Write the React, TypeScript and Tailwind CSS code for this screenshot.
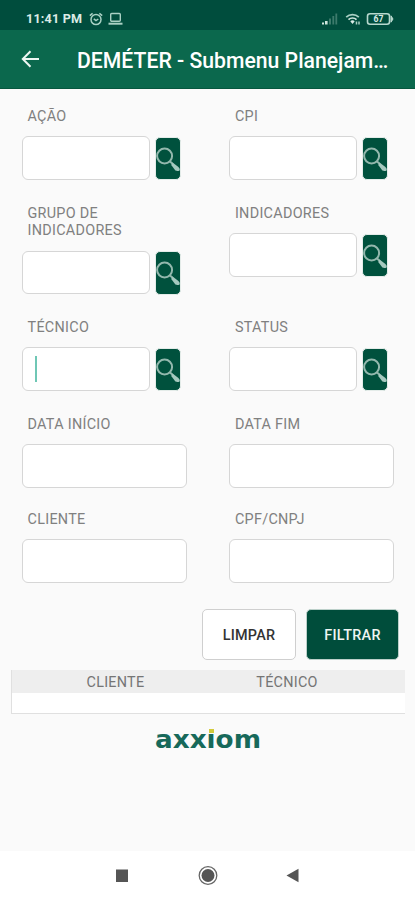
type FieldProps = {
  label: string;
  search?: boolean;
  focused?: boolean;
};

function SearchIcon() {
  return (
    <svg width="26" height="44" viewBox="0 0 26 44" className="block">
      <circle cx="9.6" cy="19" r="7.5" fill="none" stroke="#93b8ad" strokeWidth="2" />
      <path d="M14.8 24.2l3 2.8" stroke="#93b8ad" strokeWidth="2" />
      <path
        d="M17.6 25.6l5.8 4.4q1.8 1.8 1.2 3.4q-1.8 1.2-4.2 0.2l-4.2-5.6z"
        fill="#a5c9bf"
      />
    </svg>
  );
}

function Field({ label, search, focused }: FieldProps) {
  return (
    <div className="w-[165px]">
      <div className="w-[130px] pl-[5.5px] mb-[11px] text-[14.4px] leading-[17.3px] tracking-[0.29px] text-[#808080]">
        {label}
      </div>
      <div className="flex gap-[5px]">
        <div
          className={
            "flex items-center h-[43.5px] rounded-[6px] border border-[#d6d6d6] bg-white " +
            (search ? "w-[128px]" : "w-[165px]")
          }
        >
          {focused && <span className="ml-[11.5px] h-[26px] w-[2.5px] bg-[#6fc7b5]" />}
        </div>
        {search && (
          <button className="mt-[0.5px] h-[43.5px] w-[26px] shrink-0 overflow-hidden rounded-[5px] border border-[#e4ece9] bg-[#00513d]">
            <span className="-m-px block">
              <SearchIcon />
            </span>
          </button>
        )}
      </div>
    </div>
  );
}

function StatusBar() {
  return (
    <div className="flex h-[30px] items-center bg-[#004d3d] pt-[7px] pl-[26px] text-[#dcebe6]">
      <span className="w-[58px] whitespace-nowrap text-[12.6px] font-bold leading-4 tracking-[0.2px]">
        11:41 PM
      </span>
      <svg className="ml-[4px]" width="16" height="14" viewBox="0 0 16 14" fill="none" stroke="#a9d0c4" strokeWidth="1.5">
        <circle cx="8" cy="7.6" r="5" />
        <path d="M1.8 3.6L4.6 1.3M14.2 3.6L11.4 1.3M5.8 6.8L8 8.6l2.3-1.6" />
      </svg>
      <svg className="ml-[4px]" width="15" height="14" viewBox="0 0 15 14" fill="none" stroke="#a9d0c4" strokeWidth="1.4">
        <rect x="2.7" y="1.5" width="9.6" height="7.8" rx="1" />
        <path d="M0.5 11.7h14" strokeWidth="2" />
      </svg>
      <div className="ml-auto mr-[21px] flex items-center">
        <svg width="17" height="14" viewBox="0 0 17 14">
          <path d="M1 12.5v-2h2v2zM4 12.5V9h2.6v3.5z" fill="#cfe5de" />
          <path d="M8 12.5V6.5h2v6zM11.4 12.5V4h1.8v8.5zM14.4 12.5V1.5h1.8v11z" fill="#3d7b6c" />
        </svg>
        <svg className="ml-[7px]" width="17" height="14" viewBox="0 0 17 14" fill="none" strokeWidth="1.7">
          <path d="M1.2 5.1a9 9 0 0 1 12.6 0" stroke="#a9d0c4" />
          <path d="M3.5 7.6a5.8 5.8 0 0 1 8 0" stroke="#cfe5de" />
          <path d="M5.3 9.3a3.2 3.2 0 0 1 4.4 0L7.5 12z" fill="#dcebe6" />
          <path d="M11.5 9.5v3M14 9.5v3" stroke="#a9d0c4" strokeWidth="1.5" />
        </svg>
        <svg className="ml-[4px]" width="28" height="14" viewBox="0 0 28 14">
          <rect x="1.5" y="1.7" width="22" height="10.6" rx="2.5" fill="none" stroke="#b7d8ce" strokeWidth="1.6" />
          <path d="M25 3.8l2 3.2-2 3.2z" fill="#b7d8ce" stroke="#b7d8ce" />
          <text x="12.5" y="10.2" textAnchor="middle" fontSize="8.6" fontWeight="700" fill="#dcebe6">
            67
          </text>
        </svg>
      </div>
    </div>
  );
}

function Header() {
  return (
    <header className="flex h-[58.5px] items-center border-b border-[#07573f] bg-[#0b684d] text-white">
      <svg className="ml-[21px]" width="19" height="18" viewBox="0 0 19 18" fill="none" stroke="#eef7f3" strokeWidth="2">
        <path d="M18 9H2M9.5 1.2L1.8 9l7.7 7.8" />
      </svg>
      <h1 className="ml-[37px] whitespace-nowrap pt-[4px] text-[21.2px] font-medium leading-7">
        DEMÉTER - Submenu Planejam…
      </h1>
    </header>
  );
}

function Logo() {
  return (
    <svg width="110" height="34" viewBox="0 0 110 34">
      <text
        x="2"
        y="25"
        fontFamily="DejaVu Sans"
        fontWeight="700"
        fontSize="25.5"
        fill="#17695a"
        textLength="106"
        lengthAdjust="spacingAndGlyphs"
      >
        axxiom
      </text>
      {/* yellow dot over the i */}
      <rect x="54.5" y="4" width="7.5" height="6" fill="#fafafa" />
      <rect x="56" y="6" width="5" height="4" fill="#d3cb3c" />
    </svg>
  );
}

function NavBar() {
  return (
    <nav className="flex h-[49px] bg-white">
      <svg width="415" height="49" viewBox="0 0 415 49" fill="#555">
        <rect x="116" y="18.5" width="12" height="12.5" />
        <circle cx="208" cy="24.5" r="6.5" />
        <circle cx="208" cy="24.5" r="8.8" fill="none" stroke="#666" strokeWidth="1.3" />
        <path d="M286.5 24.5l12-6.8v13.6z" />
      </svg>
    </nav>
  );
}

export default function App() {
  return (
    <div className="flex h-[900px] w-[415px] flex-col overflow-hidden bg-[#fafafa] font-[Roboto,sans-serif]">
      <StatusBar />
      <Header />

      <main className="flex grow flex-col">
        <div className="grid grid-cols-[165px_165px] grid-rows-[97px_114px_97px_95px_98px] gap-x-[42.4px] pt-[19.5px] pl-[22px]">
          <Field label="AÇÃO" search />
          <Field label="CPI" search />
          <Field label="GRUPO DE INDICADORES" search />
          <Field label="INDICADORES" search />
          <Field label="TÉCNICO" search focused />
          <Field label="STATUS" search />
          <Field label="DATA INÍCIO" />
          <Field label="DATA FIM" />
          <Field label="CLIENTE" />
          <Field label="CPF/CNPJ" />
        </div>

        <div className="flex justify-end gap-[10px] pr-4 text-[14.4px] font-medium">
          <button className="h-[51px] w-[94px] rounded-[5px] border border-[#cfcfcf] bg-white pt-[2px] tracking-[0.2px] text-[#333]">
            LIMPAR
          </button>
          <button className="h-[51px] w-[93px] rounded-[5px] border border-[#bcd0ca] bg-[#004d3b] pt-[2px] tracking-[0.3px] text-[#eef5f2]">
            FILTRAR
          </button>
        </div>

        <div className="mt-[9.5px] ml-[11px] h-[44.5px] w-[394px] border-b border-l border-[#e0e0e0] bg-white">
          <div className="grid h-[23px] grid-cols-[207px_136px] bg-[#eee] text-center text-[14.4px] leading-[26px] tracking-[0.25px] text-[#757575]">
            <span>CLIENTE</span>
            <span>TÉCNICO</span>
          </div>
        </div>

        <div className="mt-[9px] flex justify-center">
          <Logo />
        </div>
      </main>

      <NavBar />
    </div>
  );
}
